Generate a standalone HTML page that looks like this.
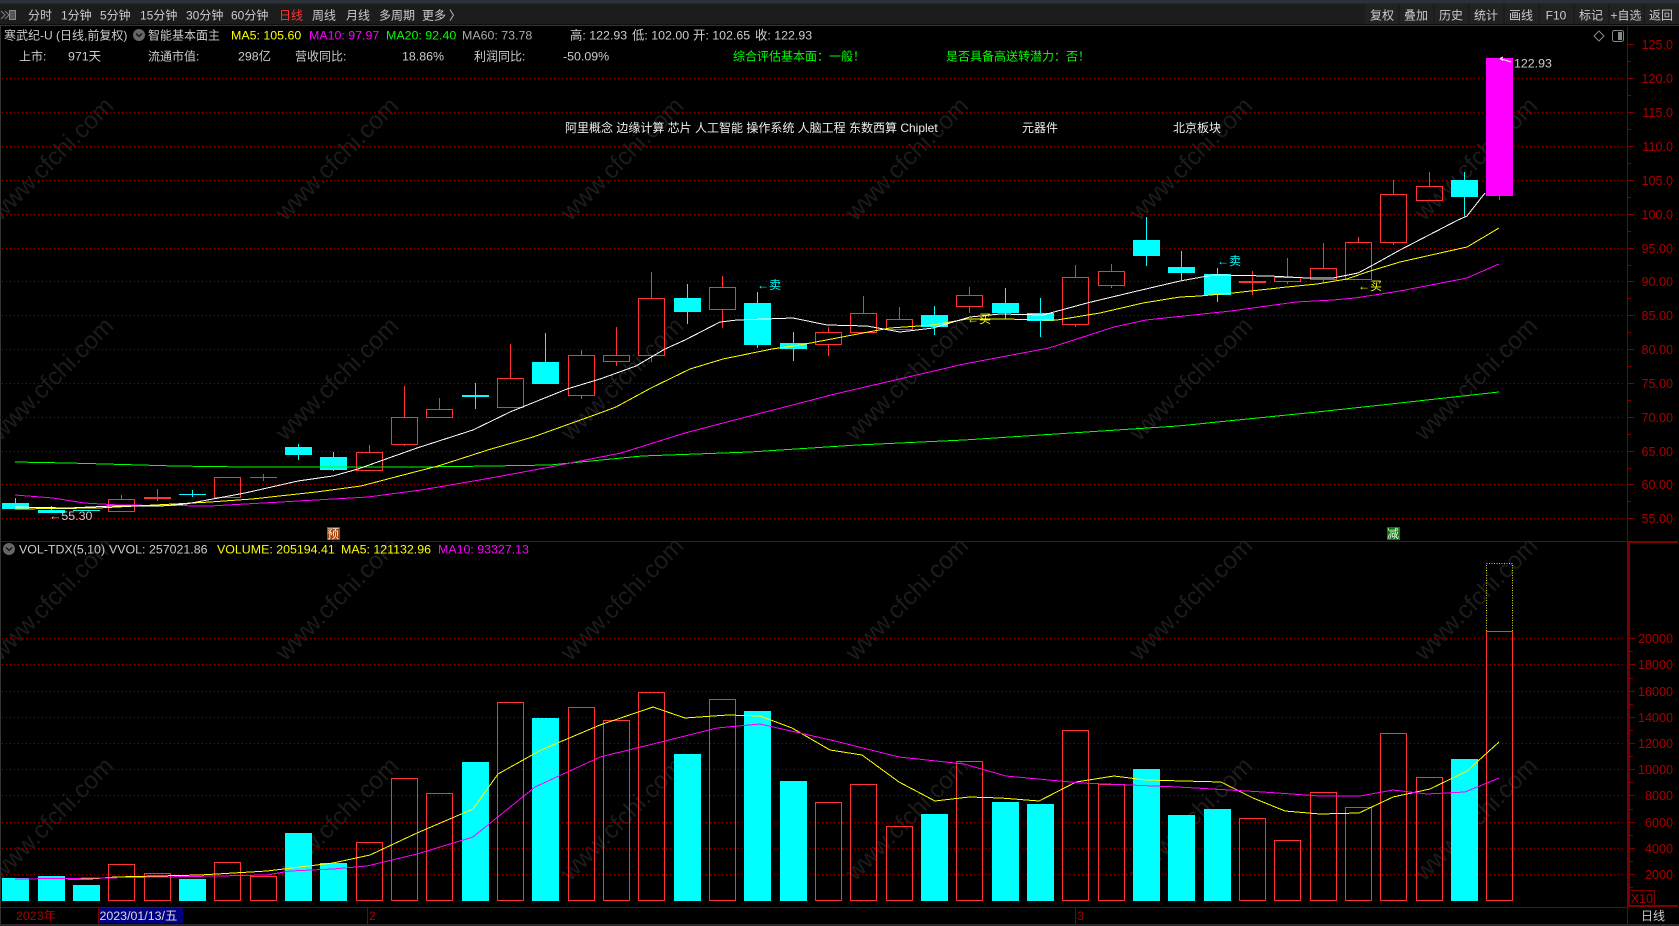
<!DOCTYPE html>
<html><head><meta charset="utf-8"><title>寒武纪-U</title>
<style>
html,body{margin:0;padding:0;background:#000;width:1679px;height:926px;overflow:hidden}
svg{display:block;position:absolute;left:0;top:0}
text{font-family:"Liberation Sans","Noto Sans CJK SC",sans-serif;font-size:12px;fill:#ccc;white-space:pre}
.wm text{font-size:24.5px;fill:#1c1c1c;text-anchor:middle}
.ax text{fill:#a80000;text-anchor:end;font-size:12.6px}
.t{text-anchor:middle}
.s{font-size:12px}
text.l{font-size:12.4px}
</style></head><body>
<svg width="1679" height="926" viewBox="0 0 1679 926">
<rect width="1679" height="926" fill="#000"/>
<!-- toolbar -->
<rect width="1679" height="3.5" fill="#2b3139"/>
<rect y="3.5" width="1679" height="21" fill="#1c1c1c"/>
<rect y="25" width="1679" height="1" fill="#333"/>
<g fill="#222"><rect x="1365" y="4" width="33" height="20"/><rect x="1400" y="4" width="33" height="20"/><rect x="1435" y="4" width="33" height="20"/><rect x="1470" y="4" width="33" height="20"/><rect x="1505" y="4" width="33" height="20"/><rect x="1540" y="4" width="33" height="20"/><rect x="1575" y="4" width="33" height="20"/><rect x="1610" y="4" width="33" height="20"/><rect x="1645" y="4" width="34" height="20"/></g>
<path d="M1 11l4 4-4 4M5 11l4 4-4 4" fill="none" stroke="#777" stroke-width="1.2"/><rect x="9.5" y="10.5" width="6" height="9" fill="#555" stroke="#888"/>
<text x="28" y="19.5">分时</text><text x="61" y="19.5">1分钟</text><text x="100" y="19.5">5分钟</text><text x="140" y="19.5">15分钟</text><text x="186" y="19.5">30分钟</text><text x="231" y="19.5">60分钟</text><text x="279" y="19.5" style="fill:#f33">日线</text><text x="312" y="19.5">周线</text><text x="346" y="19.5">月线</text><text x="379" y="19.5">多周期</text><text x="422" y="19.5">更多</text><text x="449" y="19.5">〉</text>
<g class="btn"><text class="t" x="1382" y="19.5">复权</text><text class="t" x="1416" y="19.5">叠加</text><text class="t" x="1451" y="19.5">历史</text><text class="t" x="1486" y="19.5">统计</text><text class="t" x="1521" y="19.5">画线</text><text class="t" x="1556" y="19.5">F10</text><text class="t" x="1591" y="19.5">标记</text><text class="t" x="1626" y="19.5">+自选</text><text class="t" x="1661" y="19.5">返回</text></g>
<!-- watermark -->
<g class="wm">
<text transform="translate(52,159) rotate(-45)" y="8">www.cfchi.com</text><text transform="translate(337,159) rotate(-45)" y="8">www.cfchi.com</text><text transform="translate(622,159) rotate(-45)" y="8">www.cfchi.com</text><text transform="translate(907,159) rotate(-45)" y="8">www.cfchi.com</text><text transform="translate(1191,159) rotate(-45)" y="8">www.cfchi.com</text><text transform="translate(1476,159) rotate(-45)" y="8">www.cfchi.com</text>
<text transform="translate(52,379) rotate(-45)" y="8">www.cfchi.com</text><text transform="translate(337,379) rotate(-45)" y="8">www.cfchi.com</text><text transform="translate(622,379) rotate(-45)" y="8">www.cfchi.com</text><text transform="translate(907,379) rotate(-45)" y="8">www.cfchi.com</text><text transform="translate(1191,379) rotate(-45)" y="8">www.cfchi.com</text><text transform="translate(1476,379) rotate(-45)" y="8">www.cfchi.com</text>
<text transform="translate(52,599) rotate(-45)" y="8">www.cfchi.com</text><text transform="translate(337,599) rotate(-45)" y="8">www.cfchi.com</text><text transform="translate(622,599) rotate(-45)" y="8">www.cfchi.com</text><text transform="translate(907,599) rotate(-45)" y="8">www.cfchi.com</text><text transform="translate(1191,599) rotate(-45)" y="8">www.cfchi.com</text><text transform="translate(1476,599) rotate(-45)" y="8">www.cfchi.com</text>
<text transform="translate(52,819) rotate(-45)" y="8">www.cfchi.com</text><text transform="translate(337,819) rotate(-45)" y="8">www.cfchi.com</text><text transform="translate(622,819) rotate(-45)" y="8">www.cfchi.com</text><text transform="translate(907,819) rotate(-45)" y="8">www.cfchi.com</text><text transform="translate(1191,819) rotate(-45)" y="8">www.cfchi.com</text><text transform="translate(1476,819) rotate(-45)" y="8">www.cfchi.com</text>
</g>
<g shape-rendering="crispEdges">
<!-- grid -->
<path fill="none" stroke="#900000" stroke-dasharray="1 3" d="M2 78.5H1623M2 112.5H1623M2 146.5H1623M2 180.5H1623M2 214.5H1623M2 248.5H1623M2 281.5H1623M2 315.5H1623M2 349.5H1623M2 383.5H1623M2 417.5H1623M2 451.5H1623M2 484.5H1623M2 518.5H1623M2 638.5H1623M2 664.5H1623M2 691.5H1623M2 717.5H1623M2 743.5H1623M2 769.5H1623M2 795.5H1623M2 822.5H1623M2 848.5H1623M2 874.5H1623"/>
<!-- frame -->
<path fill="none" stroke="#800000" d="M0 541.5H1628M0 907.5H1628M1627.5 26V924M1628 44.5h6M1628 78.5h6M1628 112.5h6M1628 146.5h6M1628 180.5h6M1628 214.5h6M1628 248.5h6M1628 281.5h6M1628 315.5h6M1628 349.5h6M1628 383.5h6M1628 417.5h6M1628 451.5h6M1628 484.5h6M1628 518.5h6M1628 61.5h3M1628 95.5h3M1628 129.5h3M1628 163.5h3M1628 197.5h3M1628 231.5h3M1628 265.5h3M1628 298.5h3M1628 332.5h3M1628 366.5h3M1628 400.5h3M1628 434.5h3M1628 468.5h3M1628 501.5h3M1630 638.5h5M1630 664.5h5M1630 691.5h5M1630 717.5h5M1630 743.5h5M1630 769.5h5M1630 795.5h5M1630 822.5h5M1630 848.5h5M1630 874.5h5M1630 651.5h3M1630 678.5h3M1630 704.5h3M1630 730.5h3M1630 756.5h3M1630 782.5h3M1630 809.5h3M1630 835.5h3M1630 861.5h3M1630 887.5h3M1628.5 890.5H1654.5V906M98.5 908V924M367.5 908V924M1075.5 908V924"/>
<path fill="none" stroke="#800000" stroke-width="2" d="M1629 542V906H1678M1628 542H1678"/>
<rect x="0" y="26" width="1" height="898" fill="#333"/>
<rect y="924" width="1679" height="2" fill="#2a2a2a"/>
<!-- volume bars -->
<path fill="#0ff" d="M2 878h27v23H2zM38 876h27v25H38zM73 885h27v16H73zM179 879h27v22h-27zM285 833h27v68h-27zM320 863h27v38h-27zM462 762h27v139h-27zM532 718h27v183h-27zM674 754h27v147h-27zM744 711h27v190h-27zM780 781h27v120h-27zM921 814h27v87h-27zM1027 804h27v97h-27zM992 802h27v99h-27zM1133 769h27v132h-27zM1168 815h27v86h-27zM1204 809h27v92h-27zM1451 759h27v142h-27z"/>
<path fill="none" stroke="#f33" d="M108.5 864.5h26V900.5h-26zM144.5 873.5h26V900.5h-26zM214.5 862.5h26V900.5h-26zM250.5 876.5h26V900.5h-26zM356.5 842.5h26V900.5h-26zM391.5 778.5h26V900.5h-26zM426.5 793.5h26V900.5h-26zM497.5 702.5h26V900.5h-26zM568.5 707.5h26V900.5h-26zM603.5 720.5h26V900.5h-26zM638.5 692.5h26V900.5h-26zM709.5 699.5h26V900.5h-26zM815.5 802.5h26V900.5h-26zM850.5 784.5h26V900.5h-26zM886.5 826.5h26V900.5h-26zM956.5 761.5h26V900.5h-26zM1062.5 730.5h26V900.5h-26zM1098.5 784.5h26V900.5h-26zM1239.5 818.5h26V900.5h-26zM1274.5 840.5h26V900.5h-26zM1310.5 792.5h26V900.5h-26zM1345.5 807.5h26V900.5h-26zM1380.5 733.5h26V900.5h-26zM1416.5 777.5h26V900.5h-26zM1486.5 631.5h26V900.5h-26z"/>
<path fill="none" stroke="#dd0" stroke-dasharray="1 1.5" d="M1486.5 631V563.5H1512.5V631"/>
<!-- candles cyan -->
<path fill="#0ff" d="M2 503h27v6H2zM38 510h27v3H38zM73 510h27v1H73zM179 494h27v1h-27zM285 447h27v8h-27zM320 457h27v13h-27zM462 395h27v2h-27zM532 362h27v22h-27zM674 298h27v14h-27zM744 303h27v42h-27zM780 343h27v6h-27zM921 315h27v12h-27zM992 303h27v10h-27zM1027 313h27v8h-27zM1133 240h27v16h-27zM1168 267h27v6h-27zM1204 274h27v21h-27zM1451 180h27v17h-27z"/>
<path fill="none" stroke="#0ff" d="M15.5 498v5M51.5 506v4M192.5 490v7M298.5 444v3M298.5 455v5M333.5 452v5M333.5 470v1M475.5 383v26M545.5 333v29M687.5 284v14M687.5 312v12M757.5 292v11M757.5 345v3M793.5 332v11M793.5 349v12M934.5 306v9M934.5 327v8M1005.5 288v15M1005.5 313v6M1040.5 298v15M1040.5 321v16M1146.5 217v23M1146.5 256v10M1181.5 251v16M1181.5 273v7M1217.5 268v6M1217.5 295v7M1464.5 172v8M1464.5 197v19"/>
<!-- candles red -->
<path fill="#f33" d="M144 497h27v2h-27zM1239 281h27v2h-27z"/>
<path fill="none" stroke="#f33" d="M108.5 499.5h26v12h-26zM121.5 495v4M157.5 489v12M214.5 477.5h26v20h-26zM263.5 474v7M250 477.5h27M356.5 452.5h26v18h-26zM369.5 445v7M391.5 417.5h26v27h-26zM404.5 386v31M404.5 445v1M426.5 409.5h26v8h-26zM439.5 398v11M497.5 378.5h26v29h-26zM510.5 344v34M568.5 355.5h26v40h-26zM581.5 350v5M581.5 396v3M603.5 355.5h26v6h-26zM616.5 327v28M616.5 362v4M638.5 298.5h26v57h-26zM651.5 272v26M651.5 356v6M709.5 287.5h26v22h-26zM722.5 276v11M722.5 310v18M815.5 332.5h26v12h-26zM828.5 327v5M828.5 345v11M850.5 313.5h26v19h-26zM863.5 296v17M886.5 319.5h26v10h-26zM899.5 307v12M956.5 295.5h26v11h-26zM969.5 287v8M969.5 307v6M1062.5 277.5h26v47h-26zM1075.5 265v12M1075.5 325v2M1098.5 271.5h26v14h-26zM1111.5 264v7M1111.5 286v2M1252.5 271v24M1274.5 277.5h26v4h-26zM1287.5 258v19M1287.5 282v2M1310.5 268.5h26v11h-26zM1323.5 243v25M1323.5 280v3M1345.5 242.5h26v37h-26zM1358.5 237v5M1380.5 194.5h26v48h-26zM1393.5 180v14M1393.5 243v2M1416.5 186.5h26v14h-26zM1429.5 172v14"/>
<!-- limit-up candle -->
<rect x="1486" y="58" width="27" height="138" fill="#f0f"/>
<path stroke="#f0f" fill="none" d="M1499.5 196v4"/>
<!-- MA lines -->
<g fill="none">
<polyline stroke="#0f0" points="15,462 68,463 105,464 175,466 245,467 421,467 491,466 550,465 642,456 750,452 857,445 964,440 1071,433 1178,426 1317,412 1400,403 1499,392"/>
<polyline stroke="#f0f" points="15,495 53,498 84,503 119,505 210,506 245,504 281,502 333,499 368,497 421,490 491,478 550,467 621,453 685,433 723,423 835,394 964,364 1049,348 1114,327 1146,320 1231,311 1296,302 1333,300 1355,298 1400,291 1467,278 1499,264"/>
<polyline stroke="#ff0" points="15,509 98,508 174,504 210,502 252,499 316,492 361,486 403,475 438,466 491,449 533,437 600,413 616,407 651,388 690,369 723,359 772,349 800,345 863,333 890,328 933,325 967,319 1000,319 1057,320 1100,313 1143,303 1180,297 1200,296 1233,293 1287,287 1317,284 1347,279 1367,272 1400,262 1467,247 1499,228"/>
<polyline stroke="#fff" points="15,507 69,508 112,506 161,506 186,504 245,493 298,481 333,476 358,469 386,459 417,448 473,430 510,412 567,389 600,379 636,366 665,349 685,340 720,322 737,320 793,318 827,325 867,326 900,332 933,328 970,317 1000,314 1043,315 1087,303 1133,292 1180,281 1213,275 1270,276 1307,278 1333,278 1358,273 1373,265 1400,250 1458,220 1467,216 1485,193"/>
<polyline stroke="#ff0" points="68,879 90,879 115,877 200,875 267,871 333,863 370,855 417,833 473,809 498,774 541,750 600,725 653,707 685,718 728,715 760,716 792,728 830,750 862,755 899,782 935,801 969,797 1001,798 1039,801 1076,782 1114,776 1146,780 1221,782 1253,798 1285,811 1320,814 1359,813 1393,797 1430,789 1467,771 1499,742"/>
<polyline stroke="#f0f" points="15,879 103,878 217,876 267,875 290,871 333,869 367,866 417,854 473,837 535,787 600,757 653,744 717,728 760,724 835,741 899,757 964,764 1006,776 1081,783 1178,787 1263,792 1320,796 1360,796 1393,790 1427,794 1465,792 1499,778"/>
</g>
</g>
<!-- diamond & panel icons -->
<path d="M1599 31l5 5-5 5-5-5z" fill="none" stroke="#888"/>
<rect x="1612.5" y="30.5" width="11" height="11" rx="2" fill="none" stroke="#888"/><rect x="1618" y="32" width="4" height="8" fill="#888"/>
<!-- headers -->
<text x="4" y="39.5">寒武纪-U (日线,前复权)</text>
<circle cx="139" cy="35" r="6" fill="#666"/><path d="M136 33.5l3 3 3-3" fill="none" stroke="#111" stroke-width="1.3"/>
<text x="148" y="39.5">智能基本面主</text>
<text class="l" x="231" y="39.5" style="fill:#ff0">MA5: 105.60</text><text class="l" x="309" y="39.5" style="fill:#f0f">MA10: 97.97</text><text class="l" x="386" y="39.5" style="fill:#0f0">MA20: 92.40</text><text class="l" x="462" y="39.5" style="fill:#aaa">MA60: 73.78</text>
<text class="l" x="570" y="39.5">高: 122.93</text><text class="l" x="632" y="39.5">低: 102.00</text><text class="l" x="693" y="39.5">开: 102.65</text><text class="l" x="755" y="39.5">收: 122.93</text>
<text x="19" y="60.5">上市:</text><text class="l" x="68" y="60.5">971天</text><text x="148" y="60.5">流通市值:</text><text class="l" x="238" y="60.5">298亿</text><text x="295" y="60.5">营收同比:</text><text class="l" x="402" y="60.5">18.86%</text><text x="474" y="60.5">利润同比:</text><text class="l" x="563" y="60.5">-50.09%</text>
<text x="733" y="60.5" style="fill:#0f0">综合评估基本面：一般！</text><text x="946" y="60.5" style="fill:#0f0">是否具备高送转潜力：否！</text>
<text x="565" y="132" style="fill:#eee">阿里概念 边缘计算 芯片 人工智能 操作系统 人脑工程 东数西算 Chiplet</text><text x="1022" y="132" style="fill:#eee">元器件</text><text x="1173" y="132" style="fill:#eee">北京板块</text>
<!-- price labels -->
<path d="M1500 58.5l11 3.5M1500 58.5l3-1.5M1500 58.5l3 2" fill="none" stroke="#fff"/><text class="l" x="1514" y="67.5">122.93</text>
<text class="l" x="49" y="520">←55.30</text>
<text x="757" y="289" class="s" style="fill:#0ff">←卖</text><text x="1217" y="265" class="s" style="fill:#0ff">←卖</text>
<text x="967" y="323" class="s" style="fill:#ff0">←买</text><text x="1358" y="290" class="s" style="fill:#ff0">←买</text>
<rect x="327" y="527" width="13" height="13" fill="#a84000"/><text x="327" y="538" class="s" style="fill:#eee">预</text>
<rect x="1387" y="527" width="13" height="13" fill="#0a7a0a"/><text x="1387" y="538" class="s" style="fill:#eee">减</text>
<!-- volume header -->
<circle cx="9" cy="549" r="6" fill="#666"/><path d="M6 547.5l3 3 3-3" fill="none" stroke="#111" stroke-width="1.3"/>
<text class="l" x="19" y="553.5">VOL-TDX(5,10)</text><text class="l" x="109" y="553.5">VVOL: 257021.86</text><text class="l" x="217" y="553.5" style="fill:#ff0">VOLUME: 205194.41</text><text class="l" x="341" y="553.5" style="fill:#ff0">MA5: 121132.96</text><text class="l" x="438" y="553.5" style="fill:#f0f">MA10: 93327.13</text>
<!-- axis -->
<g class="ax">
<text x="1673" y="49">125.0</text><text x="1673" y="83">120.0</text><text x="1673" y="117">115.0</text><text x="1673" y="151">110.0</text><text x="1673" y="185">105.0</text><text x="1673" y="219">100.0</text><text x="1673" y="253">95.00</text><text x="1673" y="286">90.00</text><text x="1673" y="320">85.00</text><text x="1673" y="354">80.00</text><text x="1673" y="388">75.00</text><text x="1673" y="422">70.00</text><text x="1673" y="456">65.00</text><text x="1673" y="489">60.00</text><text x="1673" y="523">55.00</text>
<text x="1673" y="643">20000</text><text x="1673" y="669">18000</text><text x="1673" y="696">16000</text><text x="1673" y="722">14000</text><text x="1673" y="748">12000</text><text x="1673" y="774">10000</text><text x="1673" y="800">8000</text><text x="1673" y="827">6000</text><text x="1673" y="853">4000</text><text x="1673" y="879">2000</text>
<text x="1653" y="903">X10</text>
</g>
<!-- time axis -->
<text class="l" x="16" y="920" style="fill:#a80000">2023年</text>
<rect x="99" y="908" width="84" height="15" fill="#000080"/><text class="l" x="99.5" y="920" style="fill:#ddd">2023/01/13/五</text>
<text class="l" x="369" y="920" style="fill:#a80000">2</text><text class="l" x="1077" y="920" style="fill:#a80000">3</text>
<text x="1641" y="920">日线</text>
</svg>
</body></html>
